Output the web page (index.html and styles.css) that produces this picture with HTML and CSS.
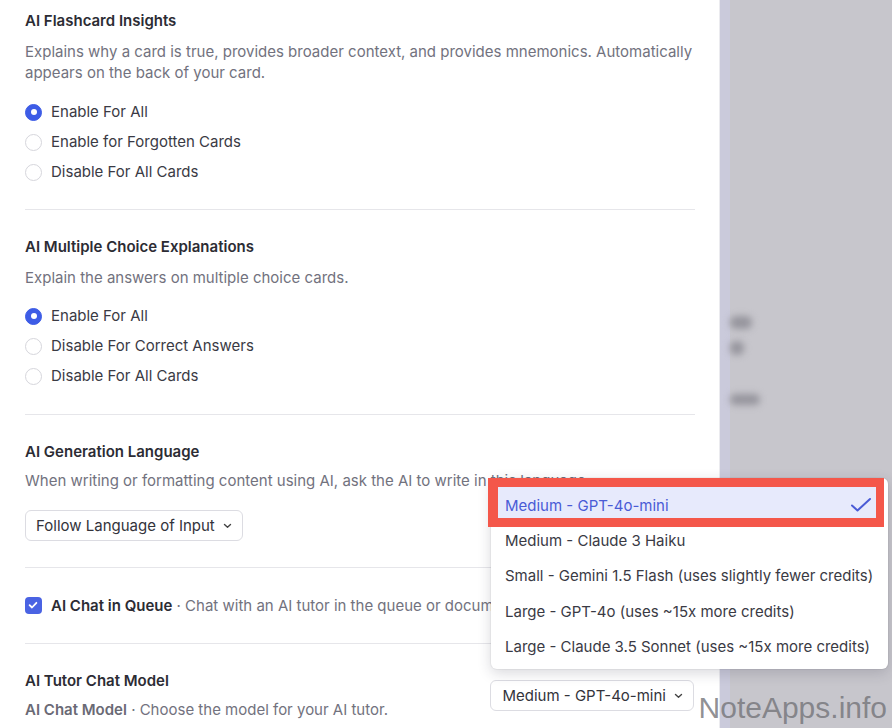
FILE: index.html
```html
<!DOCTYPE html>
<html>
<head>
<meta charset="utf-8">
<link rel="stylesheet" href="styles.css">
</head>
<body>
<div class="screen">
  <main class="panel">
    <section class="section first">
      <h2 class="title">AI Flashcard Insights</h2>
      <p class="desc">Explains why a card is true, provides broader context, and provides mnemonics. Automatically appears on the back of your card.</p>
      <div class="radios">
        <div class="radio-row"><span class="radio on"></span>Enable For All</div>
        <div class="radio-row"><span class="radio"></span>Enable for Forgotten Cards</div>
        <div class="radio-row"><span class="radio"></span>Disable For All Cards</div>
      </div>
    </section>
    <section class="section">
      <h2 class="title">AI Multiple Choice Explanations</h2>
      <p class="desc">Explain the answers on multiple choice cards.</p>
      <div class="radios r2">
        <div class="radio-row"><span class="radio on"></span>Enable For All</div>
        <div class="radio-row"><span class="radio"></span>Disable For Correct Answers</div>
        <div class="radio-row"><span class="radio"></span>Disable For All Cards</div>
      </div>
    </section>
    <section class="section lang-sec">
      <h2 class="title">AI Generation Language</h2>
      <p class="desc tight">When writing or formatting content using AI, ask the AI to write in this language.</p>
      <div class="select lang">Follow Language of Input <svg class="chev" width="9" height="6" viewBox="0 0 9 6"><path d="M1.5 1.5 L4.5 4.3 L7.5 1.5" fill="none" stroke="#444" stroke-width="1.4" stroke-linecap="round" stroke-linejoin="round"/></svg></div>
    </section>
    <section class="section check-sec">
      <div class="check-row">
        <span class="checkbox"><svg width="16" height="16" viewBox="0 0 16 16"><path d="M4.6 8.2 L7 10.5 L11.4 5.8" fill="none" stroke="#fff" stroke-width="1.8" stroke-linecap="round" stroke-linejoin="round"/></svg></span>
        <span class="strong">AI Chat in Queue</span><span class="muted">&nbsp;· Chat with an AI tutor in the queue or document editor.</span>
      </div>
    </section>
    <section class="section last">
      <div class="model-row">
        <div>
          <h2 class="title">AI Tutor Chat Model</h2>
          <p class="desc tight"><span class="semi">AI Chat Model</span> · Choose the model for your AI tutor.</p>
        </div>
        <div class="select model">Medium - GPT-4o-mini <svg class="chev" width="9" height="6" viewBox="0 0 9 6"><path d="M1.5 1.5 L4.5 4.3 L7.5 1.5" fill="none" stroke="#444" stroke-width="1.4" stroke-linecap="round" stroke-linejoin="round"/></svg></div>
      </div>
    </section>
  </main>
  <aside class="backdrop">
    <div class="strip"></div>
    <div class="blurred">
      <span class="blob b1"></span>
      <span class="blob b2"></span>
      <span class="blob b3"></span>
    </div>
  </aside>

  <div class="menu">
    <div class="item selected">Medium - GPT-4o-mini
      <svg class="tick" width="22" height="16" viewBox="0 0 22 16"><path d="M2 8.5 L7.5 13.5 L20 2" fill="none" stroke="#4a5bd6" stroke-width="2" stroke-linecap="round" stroke-linejoin="round"/></svg>
    </div>
    <div class="item">Medium - Claude 3 Haiku</div>
    <div class="item">Small - Gemini 1.5 Flash (uses slightly fewer credits)</div>
    <div class="item">Large - GPT-4o (uses ~15x more credits)</div>
    <div class="item">Large - Claude 3.5 Sonnet (uses ~15x more credits)</div>
  </div>
  <div class="highlight"></div>
  <div class="watermark">NoteApps.info</div>
</div>
</body>
</html>
```
FILE: styles.css
```css
* { box-sizing: border-box; }
html, body { margin: 0; padding: 0; }
body {
  font-family: Inter, "Noto Sans", sans-serif;
  font-size: 15px;
  color: #2f2f38;
  background: #c7c6cc;
}
.screen {
  position: relative;
  width: 892px;
  height: 728px;
  overflow: hidden;
  display: flex;
}
.panel {
  width: 720px;
  flex: none;
  background: #fff;
  border-right: 1px solid #ebebef;
  padding: 0 25px;
}
.section {
  border-top: 1px solid #e6e6ea;
  padding: 27px 0 23px;
  width: 670px;
}
.section.first { border-top: none; padding-top: 11px; padding-bottom: 22px; }
.title {
  margin: 0;
  font-size: 15px;
  line-height: 20px;
  font-weight: 600;
  color: #2c2c34;
}
.desc {
  margin: 10px 0 0;
  font-size: 15px;
  line-height: 21px;
  color: #72727e;
}
.desc.tight { margin-top: 8px; }
.radios { margin-top: 14px; display: flex; flex-direction: column; }
.radios.r2 { margin-top: 13px; }
.radio-row {
  height: 30px;
  display: flex;
  align-items: center;
  color: #3a3a44;
  line-height: 20px;
}
.radio {
  width: 17px;
  height: 17px;
  border-radius: 50%;
  border: 1px solid #d6d6dc;
  margin-right: 9px;
  flex: none;
  display: flex;
  align-items: center;
  justify-content: center;
}
.radio.on {
  background: #3d5ce6;
  border-color: #3d5ce6;
}
.radio.on::after {
  content: "";
  width: 6px;
  height: 6px;
  border-radius: 50%;
  background: #fff;
}
.select {
  display: inline-flex;
  align-items: center;
  height: 31px;
  padding: 0 10px;
  border: 1px solid #dcdce2;
  border-radius: 6px;
  color: #33333b;
  line-height: 20px;
  white-space: nowrap;
}
.select.lang { margin-top: 19px; }
.section.lang-sec { padding-bottom: 26px; }
.chev { margin-left: 8px; }
.section.check-sec { padding: 26px 0 27px; }
.check-row {
  display: flex;
  align-items: center;
  height: 22px;
  white-space: nowrap;
}
.checkbox {
  width: 17px;
  height: 17px;
  border-radius: 4px;
  background: #4a63e3;
  margin-right: 9px;
  display: flex;
  flex: none;
}
.strong { font-weight: 600; color: #2c2c34; }
.muted { color: #72727e; }
.semi { font-weight: 600; color: #6a6a75; }
.section.last { padding-top: 27px; }
.model-row {
  display: flex;
  justify-content: space-between;
  align-items: flex-start;
}
.select.model { margin-top: 9px; margin-right: 1px; padding: 0 10px 0 11px; }

.backdrop {
  flex: 1;
  display: flex;
  background: #c7c6cc;
}
.strip {
  width: 10px;
  background: #cacadb;
  flex: none;
}
.blurred {
  position: relative;
  flex: 1;
}
.blob {
  position: absolute;
  background: #96959d;
  filter: blur(3.5px);
  border-radius: 6px;
}
.b1 { left: 0; top: 316px; width: 22px; height: 13px; }
.b2 { left: 0; top: 341px; width: 14px; height: 14px; }
.b3 { left: 0; top: 394px; width: 30px; height: 11px; }

.menu {
  position: absolute;
  left: 491px;
  top: 478px;
  width: 397px;
  height: 191px;
  background: #fff;
  border-radius: 6px;
  box-shadow: 0 4px 14px rgba(40, 40, 60, 0.18), 0 0 0 1px rgba(0,0,0,0.04);
  padding-top: 9px;
}
.item {
  position: relative;
  height: 35.5px;
  line-height: 35.5px;
  padding-left: 14px;
  color: #3a3a44;
  white-space: nowrap;
}
.item.selected {
  background: #e7eafc;
  color: #4a5bd6;
  margin: 0 10px 0 7px;
  padding-left: 7px;
  height: 35.5px;
  line-height: 37px;
}
.tick { position: absolute; right: 6px; top: 10px; }
.highlight {
  position: absolute;
  left: 488px;
  top: 478px;
  width: 396px;
  height: 49px;
  border: 9px solid #f4574a;
  border-left-width: 10px;
  border-right-width: 8px;
}
.watermark {
  position: absolute;
  right: 5px;
  bottom: 2px;
  font-family: "Liberation Sans", Arial, sans-serif;
  font-size: 30px;
  color: rgba(115, 115, 120, 0.8);
  line-height: 36px;
}
```
